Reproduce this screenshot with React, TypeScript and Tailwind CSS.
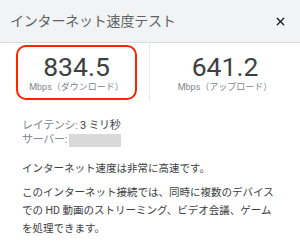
import { X } from 'lucide-react';

const font = { fontFamily: 'Roboto, "Noto Sans CJK JP", sans-serif' };

export default function App() {
  return (
    <div className="h-[242px] w-[300px] overflow-hidden bg-white" style={font}>
      <div className="flex h-[43px] items-center justify-between border-b border-[#dadce0] bg-[#f1f3f4] pl-[10px] pr-[13px]">
        <h1 className="text-[14px] tracking-[-0.2px] text-[#5f6368]">インターネット速度テスト</h1>
        <X className="h-[13px] w-[13px] text-[#202124]" strokeWidth={2.6} />
      </div>

      <section className="flex h-[58px]">
        <div className="w-[150px] border-r border-[#e8eaed] pb-[1px] pl-[16px] pr-[12px] pt-[2px]">
          <div className="flex h-full flex-col items-center justify-center rounded-[10px] border-2 border-[#ff2200] pt-[2px]">
            <p className="text-[26.5px] leading-[26px] text-[#3c4043]">834.5</p>
            <p className="text-[9px] leading-[14px] text-[#80868b]">Mbps（ダウンロード）</p>
          </div>
        </div>
        <div className="flex flex-1 flex-col items-center justify-center pt-[4px]">
          <p className="text-[26.5px] leading-[26px] text-[#3c4043]">641.2</p>
          <p className="text-[9px] leading-[14px] text-[#80868b]">Mbps（アップロード）</p>
        </div>
      </section>

      <div className="px-[22px] pt-[18px] text-[#3c4043]">
        <p className="text-[11px] leading-[14px] tracking-[-0.3px] text-[#80868b]">
          レイテンシ: <span className="text-[#3c4043]">3 ミリ秒</span>
        </p>
        <p className="flex items-center text-[11px] leading-[14px] tracking-[-0.3px] text-[#80868b]">
          サーバー:
          <span className="ml-[2px] inline-block h-[13px] w-[52px] bg-[#d9d9d9]" />
        </p>

        <p className="mt-[13px] text-[10.5px] leading-[18px]">インターネット速度は非常に高速です。</p>
        <p className="mt-[6px] text-[10.5px] leading-[18px]">
          このインターネット接続では、同時に複数のデバイスでの HD 動画のストリーミング、ビデオ会議、ゲームを処理できます。
        </p>
      </div>
    </div>
  );
}
